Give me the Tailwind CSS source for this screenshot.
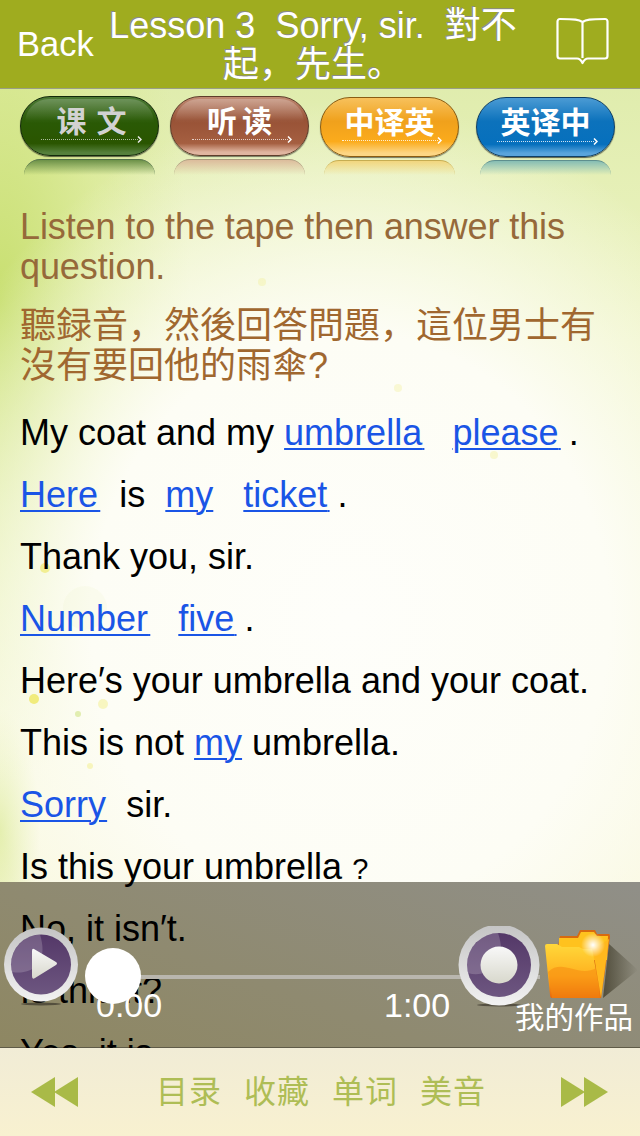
<!DOCTYPE html>
<html lang="en">
<head>
<meta charset="UTF-8">
<title>Lesson 3</title>
<script src="https://cdn.jsdelivr.net/npm/@tailwindcss/browser@4"></script>
</head>
<body class="m-0 bg-white">
<div class="relative w-[640px] h-[1136px] overflow-hidden flex flex-col font-['Liberation_Sans','Noto_Sans_CJK_SC',sans-serif] bg-[radial-gradient(ellipse_470px_520px_at_350px_620px,#fefefa_0%,#fdfdf5_55%,rgba(253,253,235,0)_100%),radial-gradient(ellipse_190px_480px_at_0px_300px,#c8df70_0%,rgba(215,232,140,0.6)_55%,rgba(230,240,170,0)_100%),radial-gradient(ellipse_40px_120px_at_0px_830px,#d8e88c_0%,rgba(216,232,140,0)_100%),linear-gradient(180deg,#dbeaa6_0%,#eef4c4_30%,#f8f8dc_70%,#f8f3d2_100%)]">

  <!-- background specks -->
  <svg class="absolute left-0 top-0" width="640" height="880" viewBox="0 0 640 880" fill="#f0ea70">
    <circle cx="45" cy="568" r="5" opacity="0.7"/>
    <circle cx="34" cy="699" r="5" opacity="0.9"/>
    <circle cx="103" cy="704" r="5" opacity="0.4"/>
    <circle cx="78" cy="714" r="3" fill="#c8df70" opacity="0.5"/>
    <circle cx="90" cy="766" r="3" opacity="0.4"/>
    <circle cx="85" cy="608" r="22" fill="#e4efb8" opacity="0.12"/>
    <circle cx="262" cy="282" r="4" opacity="0.25"/>
    <circle cx="398" cy="388" r="4" opacity="0.25"/>
    <circle cx="494" cy="455" r="4" opacity="0.3"/>
  </svg>

  <!-- header -->
  <header class="relative z-10 h-[89px] shrink-0 flex items-center bg-[#9fac1f] border-b border-[#9a9f86]">
    <a class="w-[90px] pl-[17px] pt-[1px] text-[34.5px] text-white leading-none">Back</a>
    <h1 class="w-[446px] px-[5px] pt-[1px] text-center text-[36px] font-normal leading-[39px] text-white [text-shadow:-1px_-1px_0_#8a8a8a]">Lesson 3&nbsp; Sorry, sir.&nbsp; 對不起，先生。</h1>
    <div class="flex-1 flex justify-end pr-[31px] -mt-[7px]">
      <svg width="53" height="48" viewBox="0 0 53 48" fill="none" stroke="#fff" stroke-width="2.2" stroke-linejoin="round">
        <path d="M26.5 5C23 2.5 19 2 4 2C2.500 2 1.500 3 1.500 4.500V39C1.500 40.500 2.500 41.500 4 41.500H21C24 41.500 25 43 26.500 46C28 43 29 41.500 32 41.500H49C50.500 41.500 51.500 40.500 51.500 39V4.500C51.500 3 50.500 2 49 2C34 2 30 2.500 26.500 5V41"/>
      </svg>
    </div>
  </header>

  <!-- tab buttons -->
  <nav class="relative z-10 h-[108px] shrink-0 pl-[20px] pt-[7px] flex gap-[11px] text-[30px] font-bold">
    <div class="w-[139px]">
      <div class="relative h-[60px] rounded-[30px] border border-[#12290a] shadow-[0_1px_1px_rgba(0,0,0,0.6)] bg-[linear-gradient(#4c7a35_0%,#2a5a06_40%,#2a5500_80%,#55803c_96%)] flex justify-center pl-[14px] text-[#d2d2d2] tracking-[10px] leading-[50px]">
        <span class="absolute left-[4px] right-[4px] top-[2px] h-[24px] rounded-t-[28px] bg-[linear-gradient(rgba(255,255,255,0.2),rgba(255,255,255,0))]"></span>
        <span class="relative">课文</span>
        <span class="absolute left-[20px] right-[20px] top-[42px] border-t border-dotted border-white/60"></span>
        <svg class="absolute right-[16px] top-[39px]" width="5" height="7" viewBox="0 0 5 7" fill="none" stroke="#e8e8e8" stroke-width="1.500"><path d="M1 .5L4 3.500L1 6.500"/></svg>
      </div>
      <div class="mx-[4px] h-[16px] mt-[3px] rounded-t-[30px] border-t border-[#52704a] bg-[linear-gradient(#6c9148,rgba(108,145,72,0))]"></div>
    </div>
    <div class="w-[139px]">
      <div class="relative h-[60px] rounded-[30px] border border-[#5e3d2b] shadow-[0_1px_1px_rgba(0,0,0,0.5)] bg-[linear-gradient(#c08a72_0%,#985236_40%,#a55f41_80%,#e0b5a0_95%)] flex justify-center pl-[5px] text-white tracking-[5px] leading-[50px]">
        <span class="absolute left-[4px] right-[4px] top-[2px] h-[24px] rounded-t-[28px] bg-[linear-gradient(rgba(255,255,255,0.25),rgba(255,255,255,0))]"></span>
        <span class="relative">听读</span>
        <span class="absolute left-[21px] right-[20px] top-[42px] border-t border-dotted border-white/70"></span>
        <svg class="absolute right-[16px] top-[39px]" width="5" height="7" viewBox="0 0 5 7" fill="none" stroke="#fff" stroke-width="1.500"><path d="M1 .5L4 3.500L1 6.500"/></svg>
      </div>
      <div class="mx-[4px] h-[16px] mt-[3px] rounded-t-[30px] border-t border-[#a99a7d] bg-[linear-gradient(#dcbc9c,rgba(220,188,156,0))]"></div>
    </div>
    <div class="w-[139px] pt-[1px]">
      <div class="relative h-[60px] rounded-[30px] border border-[#8a5c12] shadow-[0_1px_1px_rgba(0,0,0,0.5)] bg-[linear-gradient(#f7c15c_0%,#f0a11c_40%,#fbab1c_75%,#fdd684_95%)] flex justify-center text-white leading-[50px]">
        <span class="relative">中译英</span>
        <span class="absolute left-[21px] right-[20px] top-[42px] border-t border-dotted border-white/80"></span>
        <svg class="absolute right-[16px] top-[39px]" width="5" height="7" viewBox="0 0 5 7" fill="none" stroke="#fff" stroke-width="1.500"><path d="M1 .5L4 3.500L1 6.500"/></svg>
      </div>
      <div class="mx-[4px] h-[15px] mt-[3px] rounded-t-[30px] border-t border-[#c6ad52] bg-[linear-gradient(#f2d67e,rgba(242,214,126,0))]"></div>
    </div>
    <div class="w-[139px] ml-[6px] pt-[1px]">
      <div class="relative h-[60px] rounded-[30px] border border-[#0e3f66] shadow-[0_1px_1px_rgba(0,0,0,0.6)] bg-[linear-gradient(#4b9bd4_0%,#0c72bc_40%,#0670bd_80%,#59a4dc_95%)] flex justify-center text-white leading-[50px]">
        <span class="relative">英译中</span>
        <span class="absolute left-[20px] right-[20px] top-[43px] border-t border-dotted border-white/80"></span>
        <svg class="absolute right-[16px] top-[40px]" width="5" height="7" viewBox="0 0 5 7" fill="none" stroke="#fff" stroke-width="1.500"><path d="M1 .5L4 3.500L1 6.500"/></svg>
      </div>
      <div class="mx-[4px] h-[15px] mt-[3px] rounded-t-[30px] border-t border-[#5e8f8e] bg-[linear-gradient(#86bdb4,rgba(134,189,180,0))]"></div>
    </div>
  </nav>

  <!-- audio bar background, the lesson text stays readable through it -->
  <div class="absolute left-0 right-0 top-[882px] h-[166px] border-b border-[#5f5b48] bg-[linear-gradient(200deg,#908f88,#8f8a70_60%,#8e8762)]"></div>

  <!-- lesson text -->
  <main class="relative z-10 flex-1 px-[20px] text-[36px] text-black">
    <p class="pt-[10px] leading-[40px] text-[#96693a] tracking-[-0.1px]">Listen to the tape then answer this question.</p>
    <p class="mt-[19px] pb-[16px] leading-[40px] text-[#a0672f]">聽録音，然後回答問題，這位男士有沒有要回他的雨傘?</p>
    <div class="flex flex-col leading-[62px]">
      <p>My coat and my <a class="text-[#1a55e6] underline decoration-2 underline-offset-[3px]">umbrella<span class="text-[8px] leading-none">&nbsp;</span></a> <a class="ml-[18px] text-[#1a55e6] underline decoration-2 underline-offset-[3px]">please<span class="text-[8px] leading-none">&nbsp;</span></a> <span class="-ml-[2px]">.</span></p>
      <p><a class="text-[#1a55e6] underline decoration-2 underline-offset-[3px]">Here<span class="text-[8px] leading-none">&nbsp;</span></a> <span class="ml-[9px]">is</span> <a class="ml-[10px] text-[#1a55e6] underline decoration-2 underline-offset-[3px]">my</a> <a class="ml-[20px] text-[#1a55e6] underline decoration-2 underline-offset-[3px]">ticket<span class="text-[8px] leading-none">&nbsp;</span></a> <span class="-ml-[2px]">.</span></p>
      <p>Thank you, sir.</p>
      <p><a class="text-[#1a55e6] underline decoration-2 underline-offset-[3px]">Number<span class="text-[8px] leading-none">&nbsp;</span></a> <a class="ml-[18px] text-[#1a55e6] underline decoration-2 underline-offset-[3px]">five<span class="text-[8px] leading-none">&nbsp;</span></a> <span class="-ml-[2px]">.</span></p>
      <p>Here′s your umbrella and your coat.</p>
      <p>This is not <a class="text-[#1a55e6] underline decoration-2 underline-offset-[3px]">my</a> umbrella.</p>
      <p><a class="text-[#1a55e6] underline decoration-2 underline-offset-[3px]">Sorry<span class="text-[4px] leading-none">&nbsp;</span></a> <span class="ml-[9px]">sir.</span></p>
      <p>Is this your umbrella <span class="text-[29px] leading-none">?</span></p>
      <p>No, it isn′t.</p>
      <p>Is this it?</p>
      <p>Yes, it is.</p>
    </div>
  </main>

  <!-- audio controls -->
  <section class="absolute z-20 left-0 right-0 top-[882px] h-[166px]">
    <div class="absolute left-[113px] right-[100px] top-[93px] h-[4px] bg-[#b9b6ae]"></div>

    <svg class="absolute left-[4px] top-[45px]" width="76" height="80" viewBox="0 0 76 80">
      <defs>
        <linearGradient id="rim" x1="0" y1="0" x2="0" y2="1"><stop offset="0" stop-color="#c4c4c4"/><stop offset="1" stop-color="#f2f2f2"/></linearGradient>
        <linearGradient id="disc" x1="0" y1="0" x2="0" y2="1"><stop offset="0" stop-color="#543868"/><stop offset="1" stop-color="#6d5680"/></linearGradient>
        <linearGradient id="knob" x1="0" y1="0" x2="0" y2="1"><stop offset="0" stop-color="#f8f8f8"/><stop offset="1" stop-color="#d8d8cc"/></linearGradient>
      </defs>
      <ellipse cx="37" cy="77" rx="20" ry="1.500" fill="#3c382c" opacity="0.7"/>
      <circle cx="37" cy="37.500" r="37" fill="url(#rim)"/>
      <circle cx="37" cy="37.500" r="30" fill="url(#disc)"/>
      <path d="M37 7.500A30 30 0 0 0 8 45C24 48 46 40 36 7.500Z" fill="#fff" opacity="0.18"/>
      <path d="M30 22Q28 21 28 24V49Q28 53 31 51L52 38Q54 36.500 52 35Z" fill="url(#knob)"/>
    </svg>

    <span class="absolute left-[96px] top-[104px] text-[34px] leading-[38px] text-white">0.00</span>
    <div class="absolute left-[85px] top-[66px] w-[56px] h-[56px] rounded-full bg-white"></div>
    <span class="absolute left-[384px] top-[104px] text-[34px] leading-[38px] text-white">1:00</span>

    <svg class="absolute left-[458px] top-[44px]" width="84" height="82" viewBox="0 0 84 82">
      <ellipse cx="41" cy="79" rx="22" ry="1.500" fill="#3c382c" opacity="0.7"/>
      <circle cx="41" cy="39" r="40.500" fill="url(#rim)"/>
      <circle cx="41" cy="39" r="32" fill="url(#disc)"/>
      <path d="M41 7A32 32 0 0 0 10 47C26 52 52 42 40 7Z" fill="#fff" opacity="0.18"/>
      <circle cx="41" cy="39" r="18.500" fill="url(#knob)"/>
    </svg>

    <svg class="absolute left-[545px] top-[48px]" width="95" height="72" viewBox="0 0 95 72">
      <defs>
        <linearGradient id="fold" x1="0" y1="0" x2="0" y2="1"><stop offset="0" stop-color="#ffd83a"/><stop offset="0.6" stop-color="#ffb01e"/><stop offset="1" stop-color="#e8650a"/></linearGradient>
        <linearGradient id="shade" x1="0" y1="0" x2="1" y2="0"><stop offset="0" stop-color="#3c3826" stop-opacity="0.75"/><stop offset="1" stop-color="#3c3826" stop-opacity="0"/></linearGradient>
        <radialGradient id="glow"><stop offset="0" stop-color="#fff"/><stop offset="1" stop-color="#fff" stop-opacity="0"/></radialGradient>
      </defs>
      <path d="M64 14L93 40L58 68Z" fill="url(#shade)"/>
      <path d="M13 16L15 6H32L35 0H50L52 4H64Q65 4 65 7L56 68H10Z" fill="#d86a10"/>
      <path d="M14 8H33L36 2H49L52 6H63L62 30H14Z" fill="#ffc21e"/>
      <path d="M0 16Q0 14 2 14H12L17 17H34L38 19H47L56 68H7Q5 68 5 65Z" fill="url(#fold)"/>
      <path d="M3 42C18 28 32 48 52 38L55 68H7Z" fill="#f58a10" opacity="0.55"/>
      <path d="M48 20L56 68L64 9Z" fill="#ffb81e"/>
      <circle cx="48" cy="15" r="12" fill="url(#glow)"/>
    </svg>
    <span class="absolute left-[515px] top-[118px] text-[29.500px] leading-[36px] text-white whitespace-nowrap">我的作品</span>
  </section>

  <!-- bottom bar -->
  <footer class="absolute z-30 left-0 right-0 bottom-0 h-[88px] bg-[linear-gradient(#f1ecd6,#f8f1d0)] flex items-center text-[32px] text-[#aebd55]">
    <svg class="ml-[31px]" width="47" height="30" viewBox="0 0 47 30" fill="#a9ba47"><path d="M0 15L24 0V30Z"/><path d="M23 15L47 0V30Z"/></svg>
    <div class="ml-[78px] flex gap-[22px] tracking-[1px]">
      <span>目录</span><span>收藏</span><span>单词</span><span>美音</span>
    </div>
    <svg class="ml-auto mr-[32px]" width="47" height="30" viewBox="0 0 47 30" fill="#a9ba47"><path d="M47 15L23 0V30Z"/><path d="M24 15L0 0V30Z"/></svg>
  </footer>
</div>
</body>
</html>
